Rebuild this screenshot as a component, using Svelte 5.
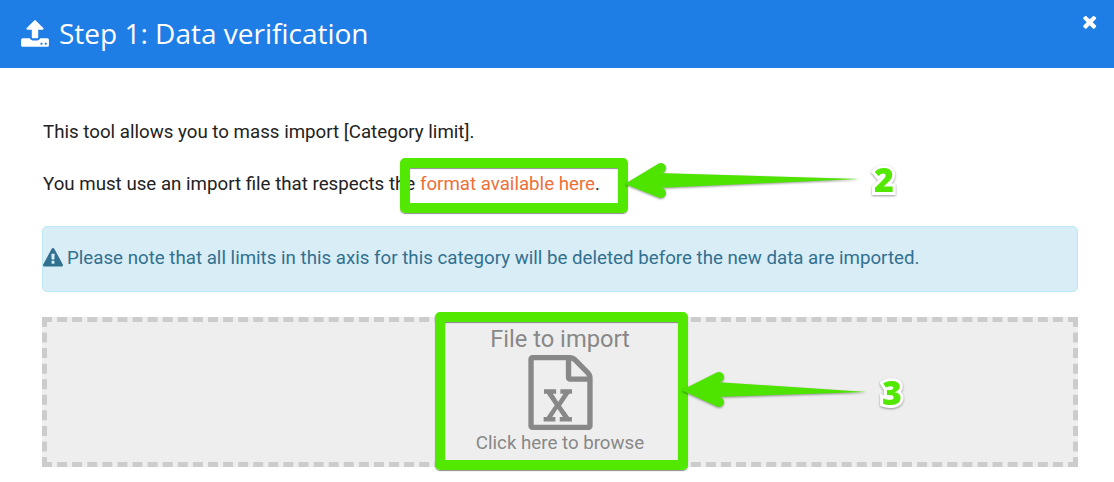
<script>
  const arrows = [
    { top: '661,168', tip: '636,183', bottom: '661,193', shaft: 'M860 179 L657 173 L641 183 L657 188 Z' },
    { top: '719,377', tip: '693,390', bottom: '719,402', shaft: 'M867 392 L715 382 L699 390 L715 397 Z' }
  ];
</script>

<div class="page">
  <header class="head">
    <svg class="up" viewBox="0 0 1792 1792" aria-hidden="true"><path fill="currentColor" d="M1344 1472q0-26-19-45t-45-19-45 19-19 45 19 45 45 19 45-19 19-45zm256 0q0-26-19-45t-45-19-45 19-19 45 19 45 45 19 45-19 19-45zm128-224v320q0 40-28 68t-68 28h-1472q-40 0-68-28t-28-68v-320q0-40 28-68t68-28h427q21 56 70.5 92t110.5 36h256q61 0 110.5-36t70.5-92h427q40 0 68 28t28 68zm-325-648q-17 40-59 40h-256v448q0 26-19 45t-45 19h-256q-26 0-45-19t-19-45v-448h-256q-42 0-59-40-17-39 14-69l448-448q18-19 45-19t45 19l448 448q31 30 14 69z"/></svg>
    <h1>Step 1: Data verification</h1>
    <svg class="close" viewBox="0 0 1408 1792" aria-hidden="true"><path fill="currentColor" d="M1298 1214q0 40-28 68l-136 136q-28 28-68 28t-68-28l-294-294-294 294q-28 28-68 28t-68-28l-136-136q-28-28-28-68t28-68l294-294-294-294q-28-28-28-68t28-68l136-136q28-28 68-28t68 28l294 294 294-294q28-28 68-28t68 28l136 136q28 28 28 68t-28 68l-294 294 294 294q28 28 28 68z"/></svg>
  </header>

  <main class="content">
    <p>This tool allows you to mass import [Category limit].</p>
    <p>You must use an import file that respects the <a href="#format">format available here</a>.</p>

    <div class="alert">
      <svg class="warn" viewBox="0 0 1792 1792" aria-hidden="true"><path fill="currentColor" d="M1024 1375v-190q0-14-9.5-23.5t-22.5-9.5h-192q-13 0-22.5 9.5t-9.5 23.5v190q0 14 9.5 23.5t22.5 9.5h192q13 0 22.5-9.5t9.5-23.5zm-2-374l18-459q0-12-10-19-13-11-24-11h-220q-11 0-24 11-10 7-10 21l17 457q0 10 10 16.5t24 6.5h185q14 0 23.5-6.5t10.5-16.5zm-14-934l768 1408q35 63-2 126-17 29-46.5 46t-63.5 17h-1536q-34 0-63.5-17t-46.5-46q-37-63-2-126l768-1408q17-31 47-49t65-18 65 18 47 49z"/></svg>
      <span>Please note that all limits in this axis for this category will be deleted before the new data are imported.</span>
    </div>

    <div class="drop">
      <div class="drop-title">File to import</div>
      <svg class="file" viewBox="0 0 1536 1792" aria-hidden="true"><path fill="currentColor" d="M1468 380q28 28 48 76t20 88v1152q0 40-28 68t-68 28h-1344q-40 0-68-28t-28-68v-1600q0-40 28-68t68-28h896q40 0 88 20t76 48zm-444-244v376h376q-10-29-22-41l-313-313q-12-12-41-22zm384 1528v-1024h-416q-40 0-68-28t-28-68v-416h-768v1536h1280zm-1043-181v106h281v-106h-75l103-161q5-7 10-16.5t7.5-13.5 3.5-4h2q1 4 5 10 2 4 4.5 7.5t6 8 6.5 8.5l107 161h-76v106h291v-106h-68l-192-273 195-282h67v-107h-279v107h74l-103 159q-4 7-10 16.5t-9 13.5l-2 3h-2q-1-4-5-10-6-11-17-23l-102-159h76v-107h-290v107h68l189 272-194 283h-68z"/></svg>
      <div class="drop-hint">Click here to browse</div>
    </div>
  </main>

  <div class="mark mark-a"></div>
  <div class="mark mark-b"></div>

  <svg class="arrows" viewBox="0 0 1114 482" aria-hidden="true">
    {#each arrows as a}
      <g class="arrow">
        <path d={a.shaft} fill="#4fe400" />
        <polyline points="{a.top} {a.tip} {a.bottom}" fill="none" stroke="#4fe400" stroke-width="10" stroke-linecap="round" stroke-linejoin="miter" />
      </g>
    {/each}
  </svg>

  <span class="num num-a">2</span>
  <span class="num num-b">3</span>
</div>

<style>
  :global(body) {
    margin: 0;
    background: #fff;
  }

  .page {
    position: relative;
    width: 1114px;
    height: 482px;
    overflow: hidden;
    font-family: Roboto, "Liberation Sans", sans-serif;
    font-size: 18.72px;
    color: #222;
  }

  .head {
    height: 68px;
    background: #1f7de6;
    color: #fff;
    display: flex;
    align-items: center;
    padding: 0 17px 0 20px;
    box-sizing: border-box;
  }

  .up {
    width: 30px;
    height: 30px;
    margin-right: 9px;
  }

  h1 {
    margin: 0 0 2px;
    flex: 1;
    font-family: "Open Sans", sans-serif;
    font-weight: 400;
    font-size: 28px;
    line-height: 66px;
  }

  .close {
    width: 15.4px;
    height: 19.6px;
    align-self: flex-start;
    margin-top: 13px;
  }

  .content {
    padding: 51px 36px 0 42px;
  }

  p {
    margin: 0 0 26px 1px;
    line-height: 26px;
  }

  a {
    color: #ec7038;
    text-decoration: none;
  }

  .alert {
    height: 66px;
    box-sizing: border-box;
    margin-top: 29px;
    padding-bottom: 3px;
    display: flex;
    align-items: center;
    gap: 4px;
    background: #d9edf7;
    border: 1px solid #bce8f1;
    border-radius: 5px;
    color: #31708f;
  }

  .warn {
    width: 20px;
    height: 20px;
    flex: none;
  }

  .drop {
    height: 150px;
    box-sizing: border-box;
    margin-top: 25px;
    border: 5px dashed #ccc;
    background: #eee;
    color: #888;
    display: flex;
    flex-direction: column;
    align-items: center;
  }

  .drop-title {
    font-size: 23.7px;
    line-height: 28px;
    height: 33px;
    padding-top: 3px;
    box-sizing: border-box;
  }

  .file {
    width: 65px;
    height: 75px;
    flex: none;
  }

  .drop-hint {
    line-height: 24px;
    padding-top: 1px;
  }

  .mark {
    position: absolute;
    box-sizing: border-box;
    border: 10px solid #52e800;
    border-radius: 5px;
    box-shadow: 0 1px 1px rgba(0, 0, 0, 0.45), inset 0 1px 1px rgba(0, 0, 0, 0.45);
  }

  .mark-a {
    left: 400px;
    top: 158px;
    width: 228px;
    height: 55px;
  }

  .mark-b {
    left: 435px;
    top: 312px;
    width: 253px;
    height: 158px;
  }

  .arrows {
    position: absolute;
    inset: 0;
    width: 1114px;
    height: 482px;
    pointer-events: none;
  }

  .arrow {
    filter: drop-shadow(0 1px 1px rgba(0, 0, 0, 0.4));
  }

  .num {
    position: absolute;
    font-family: "Open Sans", sans-serif;
    font-weight: 800;
    font-size: 34px;
    line-height: 34px;
    color: #52e800;
    -webkit-text-stroke: 6px #fff;
    paint-order: stroke fill;
    filter: drop-shadow(0 1px 1px rgba(0, 0, 0, 0.4));
  }

  .num-a {
    left: 874px;
    top: 162px;
  }

  .num-b {
    left: 882px;
    top: 375px;
  }
</style>
